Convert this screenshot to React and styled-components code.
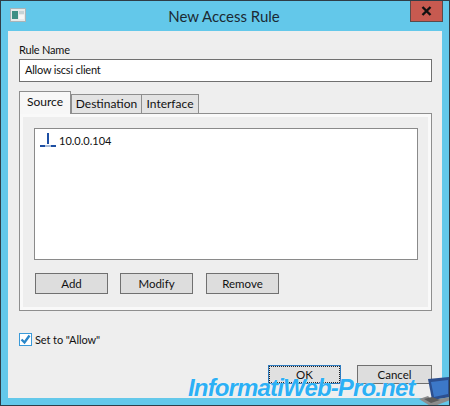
import React from "react";
import styled, { createGlobalStyle } from "styled-components";

const GlobalStyle = createGlobalStyle`
  html, body {
    margin: 0;
    padding: 0;
    background: #63c8ea;
  }
  * {
    box-sizing: border-box;
  }
`;

const Window = styled.div`
  position: relative;
  width: 450px;
  height: 406px;
  overflow: hidden;
  display: flex;
  flex-direction: column;
  background: #63c8ea;
  border: 1px solid #2f3d47;
  font-family: Lato, "Liberation Sans", sans-serif;
  font-size: 11px;
  color: #111;
`;

const TitleBar = styled.div`
  height: 30px;
  flex: none;
  display: flex;
  padding-left: 9px;
`;

const AppIcon = styled.svg`
  width: 16px;
  height: 14px;
  margin-top: 7px;
  flex: none;
`;

const Title = styled.div`
  flex: 1;
  text-align: center;
  font-size: 15px;
  line-height: 30px;
  color: #1c2a33;
  padding-left: 12px;
`;

const CloseButton = styled.div`
  width: 33px;
  height: 21px;
  margin-right: 6px;
  background: #c75a50;
  border: 1px solid #5a4a4a;
  border-top: none;
  display: flex;
  align-items: center;
  justify-content: center;
`;

const Client = styled.div`
  flex: 1;
  margin: 0 7px 7px;
  background: #eeeeee;
  padding: 10px 10px 0 11px;
  display: flex;
  flex-direction: column;
`;

const FieldLabel = styled.div`
  line-height: 17px;
  height: 18px;
  letter-spacing: -0.2px;
`;

const TextField = styled.div`
  height: 23px;
  background: #fff;
  border: 1px solid #707070;
  padding-left: 5px;
  line-height: 20px;
  letter-spacing: -0.2px;
`;

const TabRow = styled.div`
  display: flex;
  align-items: flex-end;
  height: 22px;
  margin-top: 9px;
  position: relative;
  z-index: 1;
`;

const Tab = styled.div`
  width: ${(p) => p.$width}px;
  height: ${(p) => (p.$active ? 23 : 20)}px;
  margin-bottom: -1px;
  margin-left: ${(p) => (p.$active ? 0 : -1)}px;
  background: ${(p) => (p.$active ? "#f7f7f7" : "#e3e3e3")};
  border: 1px solid #8e8e8e;
  border-bottom: ${(p) => (p.$active ? "none" : "1px solid #8e8e8e")};
  font-size: 12px;
  text-align: center;
  line-height: ${(p) => (p.$active ? 20 : 18)}px;
  &:first-child {
    margin-left: 0;
  }
  &:nth-child(2) {
    margin-left: 0;
  }
`;

const Pane = styled.div`
  height: 198px;
  background: #eeeeee;
  border: 1px solid #8e8e8e;
  box-shadow: inset 0 0 0 3px #f9f9f9;
  padding: 14px 13px 0 14px;
  display: flex;
  flex-direction: column;
`;

const ListBox = styled.div`
  height: 132px;
  background: #fff;
  border: 1px solid #8a8a8a;
  padding: 3px 5px;
`;

const ListItem = styled.div`
  display: flex;
  align-items: center;
  height: 16px;
  gap: 2px;
`;

const ButtonRow = styled.div`
  display: flex;
  margin-top: 13px;
  margin-left: 1px;
`;

const Button = styled.div`
  width: ${(p) => p.$width || 73}px;
  height: 21px;
  margin-right: ${(p) => p.$gap || 0}px;
  background: #dddddd;
  border: 1px solid #707070;
  font-size: 11.5px;
  text-align: center;
  line-height: 19px;
`;

const CheckRow = styled.div`
  display: flex;
  align-items: center;
  gap: 3px;
  margin-top: 22px;
  height: 13px;
  letter-spacing: -0.1px;
`;

const CheckBox = styled.div`
  width: 13px;
  height: 13px;
  background: #fff;
  border: 1px solid #3a9ad9;
  display: flex;
  align-items: center;
  justify-content: center;
`;

const Footer = styled.div`
  display: flex;
  justify-content: flex-end;
  margin-top: 19px;
`;

const OkButton = styled(Button)`
  height: 19px;
  margin-right: 16px;
  width: 73px;
  border: 1px solid #2f7cc0;
  outline: 1px dotted #222;
  outline-offset: -2px;
  background: #e0e0e0;
  line-height: 17px;
`;

const CancelButton = styled(Button)`
  width: 75px;
  height: 19px;
  line-height: 17px;
`;

const Watermark = styled.div`
  position: absolute;
  left: 187px;
  top: 374px;
  font-family: "Liberation Sans", Arial, sans-serif;
  font-weight: 700;
  font-style: italic;
  font-size: 24px;
  letter-spacing: -0.85px;
  line-height: 26px;
  white-space: nowrap;
  color: #2cb0f5;
  text-shadow: 0 0 1px #fff;
`;

const Laptop = styled.svg`
  position: absolute;
  left: 417px;
  top: 375px;
  width: 33px;
  height: 31px;
`;

export default function App() {
  return (
    <>
      <GlobalStyle />
      <Window>
        <TitleBar>
          <AppIcon viewBox="0 0 16 14">
            <rect x="0.5" y="0.5" width="15" height="13" fill="#e8eaea" stroke="#a9b4b8" />
            <rect x="2" y="3" width="6" height="8" fill="#3f8f84" />
            <rect x="9" y="3" width="5" height="3" fill="#c7d3d6" />
            <rect x="9" y="7" width="5" height="4" fill="#f6f6f6" />
          </AppIcon>
          <Title>New Access Rule</Title>
          <CloseButton>
            <svg width="11" height="10" viewBox="0 0 11 10">
              <path d="M1.5 1 L9.5 9 M9.5 1 L1.5 9" stroke="#111" strokeWidth="2.4" />
            </svg>
          </CloseButton>
        </TitleBar>
        <Client>
          <FieldLabel>Rule Name</FieldLabel>
          <TextField>Allow iscsi client</TextField>
          <TabRow>
            <Tab $active $width={52}>Source</Tab>
            <Tab $width={71}>Destination</Tab>
            <Tab $width={58}>Interface</Tab>
          </TabRow>
          <Pane>
            <ListBox>
              <ListItem>
                <svg width="17" height="16" viewBox="0 0 17 16">
                  <path d="M8 1 V12" stroke="#1d4fa3" strokeWidth="2" />
                  <path d="M0 14 H5 M11 14 H16" stroke="#1d4fa3" strokeWidth="2" />
                  <path d="M5 13 H11 V15 H5 Z" fill="#a9bcd8" />
                </svg>
                <span>10.0.0.104</span>
              </ListItem>
            </ListBox>
            <ButtonRow>
              <Button $gap={12}>Add</Button>
              <Button $gap={13}>Modify</Button>
              <Button>Remove</Button>
            </ButtonRow>
          </Pane>
          <CheckRow>
            <CheckBox>
              <svg width="11" height="11" viewBox="0 0 11 11">
                <path d="M1.5 5.5 L4.5 8.5 L9.5 1.5" fill="none" stroke="#2a86c8" strokeWidth="2.4" />
              </svg>
            </CheckBox>
            <span>Set to "Allow"</span>
          </CheckRow>
          <Footer>
            <OkButton>OK</OkButton>
            <CancelButton>Cancel</CancelButton>
          </Footer>
        </Client>
        <Watermark>InformatiWeb-Pro.net</Watermark>
        <Laptop viewBox="0 0 33 31">
          <path d="M10 3 L32 1 L32 21 L14 24 Z" fill="#2c4f8f" />
          <path d="M13 6 L30 4 L30 18 L16 21 Z" fill="#3c78c8" />
          <path d="M14 24 L32 21 L32 24 L14 31 L1 23 L10 20 Z" fill="#8c8c8c" />
          <path d="M6 23 L14 21 L22 24 L13 27 Z" fill="#5c5c5c" />
        </Laptop>
      </Window>
    </>
  );
}
